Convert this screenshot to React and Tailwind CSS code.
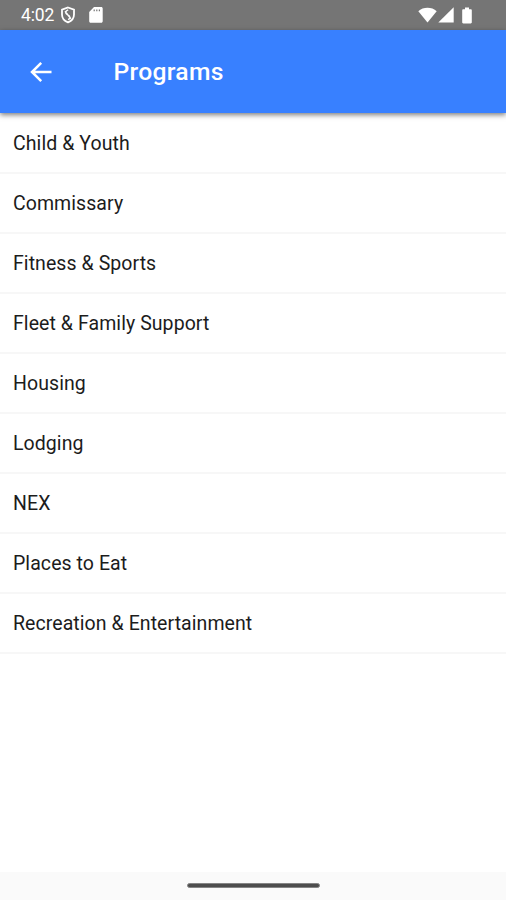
const programs = [
  'Child & Youth',
  'Commissary',
  'Fitness & Sports',
  'Fleet & Family Support',
  'Housing',
  'Lodging',
  'NEX',
  'Places to Eat',
  'Recreation & Entertainment',
];

function StatusBar() {
  return (
    <div className="flex h-[30px] shrink-0 items-center bg-[#757575] pl-[21px] pr-[34px] text-white">
      <span className="w-[34px] pt-[2px] text-[17.5px] leading-none tracking-[-0.1px] whitespace-nowrap">4:02</span>
      <svg className="ml-[5px]" width="16" height="18" viewBox="0 0 16 18" fill="none" stroke="currentColor" strokeWidth="1.8">
        <path d="M8 1.5 14 3.7v4.7c0 3.5-2.3 6.4-6 7.9-3.7-1.5-6-4.4-6-7.9V3.7z" />
        <path d="M8.2 3.8C6.4 4.6 5.2 6 6 7.5c.7 1.3 3.2 1.5 3.7 3.1.4 1.2-.4 2.4-1.5 3.2M5 5.2l5.9 7.6" strokeWidth="1.4" />
      </svg>
      <svg className="ml-[12.5px]" width="14" height="18" viewBox="0 0 14 18" fill="currentColor">
        <path fillRule="evenodd" d="M5 1h7.2c.9 0 1.5.6 1.5 1.5v12.8c0 .9-.6 1.5-1.5 1.5H1.7c-.9 0-1.5-.6-1.5-1.5V6zM4.6 3.4v1.8h1.2V3.4zm2.6 0v1.8h1.2V3.4zm2.6 0v1.8H11V3.4z" />
      </svg>
      <svg className="ml-auto" width="19" height="16" viewBox="0 0 19 16" fill="currentColor">
        <path d="M.3 4.3C5.2-.3 13.8-.3 18.7 4.3L9.5 15.5z" />
      </svg>
      <svg className="ml-[1px]" width="16" height="16" viewBox="0 0 16 16" fill="currentColor">
        <path d="M15.7.2v15.3H.3z" />
      </svg>
      <svg className="ml-[8px]" width="10" height="17" viewBox="0 0 10 17" fill="currentColor">
        <path d="M3 .5h4v1.7h1.7c.7 0 1.1.4 1.1 1.1v12c0 .7-.4 1.1-1.1 1.1H1.3c-.7 0-1.1-.4-1.1-1.1v-12c0-.7.4-1.1 1.1-1.1H3z" />
      </svg>
    </div>
  );
}

function Header() {
  return (
    <header className="relative flex h-[83px] shrink-0 items-center bg-[#3880ff] pl-[30px] text-white shadow-[0_2px_5px_rgba(0,0,0,0.5)]">
      <button aria-label="Back" className="block">
        <svg width="22" height="20" viewBox="0 0 22 20" fill="none" stroke="currentColor" strokeWidth="2.5">
          <path d="M21.5 10H2M11.2.9 2 10l9.2 9.1" />
        </svg>
      </button>
      <h1 className="ml-[61.5px] text-[24.7px] leading-[30px] font-medium tracking-[0.28px]">Programs</h1>
    </header>
  );
}

export default function App() {
  return (
    <div className="flex h-[900px] w-full flex-col overflow-hidden bg-white font-[Roboto,sans-serif]">
      <StatusBar />
      <Header />
      <ul className="flex-1 pt-[1px]">
        {programs.map((name) => (
          <li
            key={name}
            className="flex h-[60px] items-center border-b-2 border-[#f7f7f7] pt-[2px] pl-[13px] text-[19.5px] leading-[20px] tracking-[0.07px] text-[#1c1c1c]"
          >
            {name}
          </li>
        ))}
      </ul>
      <div className="flex h-[28px] shrink-0 justify-center bg-[#fafafa] pt-[11px]">
        <div className="ml-px h-[5px] w-[133px] rounded-full border border-[#858585] bg-[#4d4d4d]" />
      </div>
    </div>
  );
}
